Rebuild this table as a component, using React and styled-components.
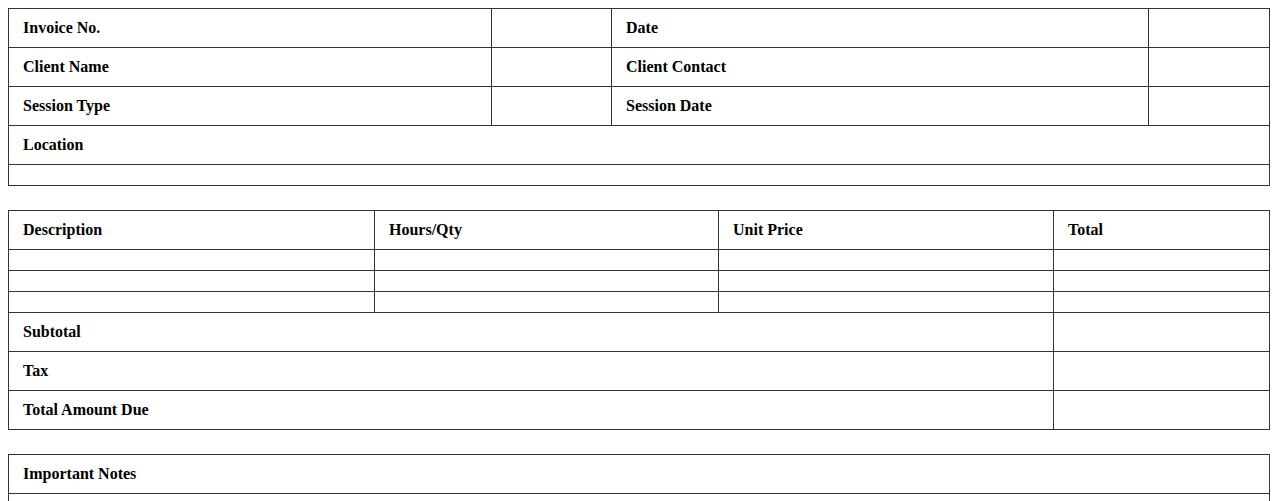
import React from "react";
import styled, { createGlobalStyle } from "styled-components";

const GlobalStyle = createGlobalStyle`
  body {
    margin: 8px;
    background: #ffffff;
    font-family: "Liberation Serif", "Times New Roman", serif;
    color: #000000;
  }
`;

const Sheet = styled.div`
  display: flex;
  flex-direction: column;
  gap: 24px;
`;

const Table = styled.table`
  width: 100%;
  border-collapse: collapse;
  table-layout: fixed;
  border: 1px solid #333333;
`;

const Cell = styled.td`
  border: 1px solid #333333;
  padding: 10px 14px;
  font-size: 16px;
  line-height: 18px;
  font-weight: ${(p) => (p.$label ? "bold" : "normal")};
  text-align: left;
  height: ${(p) => (p.$tall ? "80px" : "auto")};
`;

const HeadCell = styled.th`
  border: 1px solid #333333;
  padding: 10px 14px;
  font-size: 16px;
  line-height: 18px;
  font-weight: bold;
  text-align: left;
`;

const infoRows = [
  ["Invoice No.", "Date"],
  ["Client Name", "Client Contact"],
  ["Session Type", "Session Date"],
];

const itemCols = ["Description", "Hours/Qty", "Unit Price", "Total"];
const totals = ["Subtotal", "Tax", "Total Amount Due"];

export default function App() {
  return (
    <>
      <GlobalStyle />
      <Sheet>
        <Table>
          <colgroup>
            <col style={{ width: "483px" }} />
            <col style={{ width: "120px" }} />
            <col style={{ width: "537px" }} />
            <col />
          </colgroup>
          <tbody>
            {infoRows.map(([a, b]) => (
              <tr key={a}>
                <Cell $label>{a}</Cell>
                <Cell />
                <Cell $label>{b}</Cell>
                <Cell />
              </tr>
            ))}
            <tr>
              <Cell $label colSpan={4}>Location</Cell>
            </tr>
            <tr>
              <Cell colSpan={4} />
            </tr>
          </tbody>
        </Table>

        <Table>
          <colgroup>
            <col style={{ width: "366px" }} />
            <col style={{ width: "344px" }} />
            <col style={{ width: "335px" }} />
            <col />
          </colgroup>
          <thead>
            <tr>
              {itemCols.map((c) => (
                <HeadCell key={c}>{c}</HeadCell>
              ))}
            </tr>
          </thead>
          <tbody>
            {[0, 1, 2].map((i) => (
              <tr key={i}>
                <Cell />
                <Cell />
                <Cell />
                <Cell />
              </tr>
            ))}
            {totals.map((t) => (
              <tr key={t}>
                <Cell $label colSpan={3}>{t}</Cell>
                <Cell />
              </tr>
            ))}
          </tbody>
        </Table>

        <Table>
          <thead>
            <tr>
              <HeadCell>Important Notes</HeadCell>
            </tr>
          </thead>
          <tbody>
            <tr>
              <Cell $tall />
            </tr>
          </tbody>
        </Table>
      </Sheet>
    </>
  );
}
